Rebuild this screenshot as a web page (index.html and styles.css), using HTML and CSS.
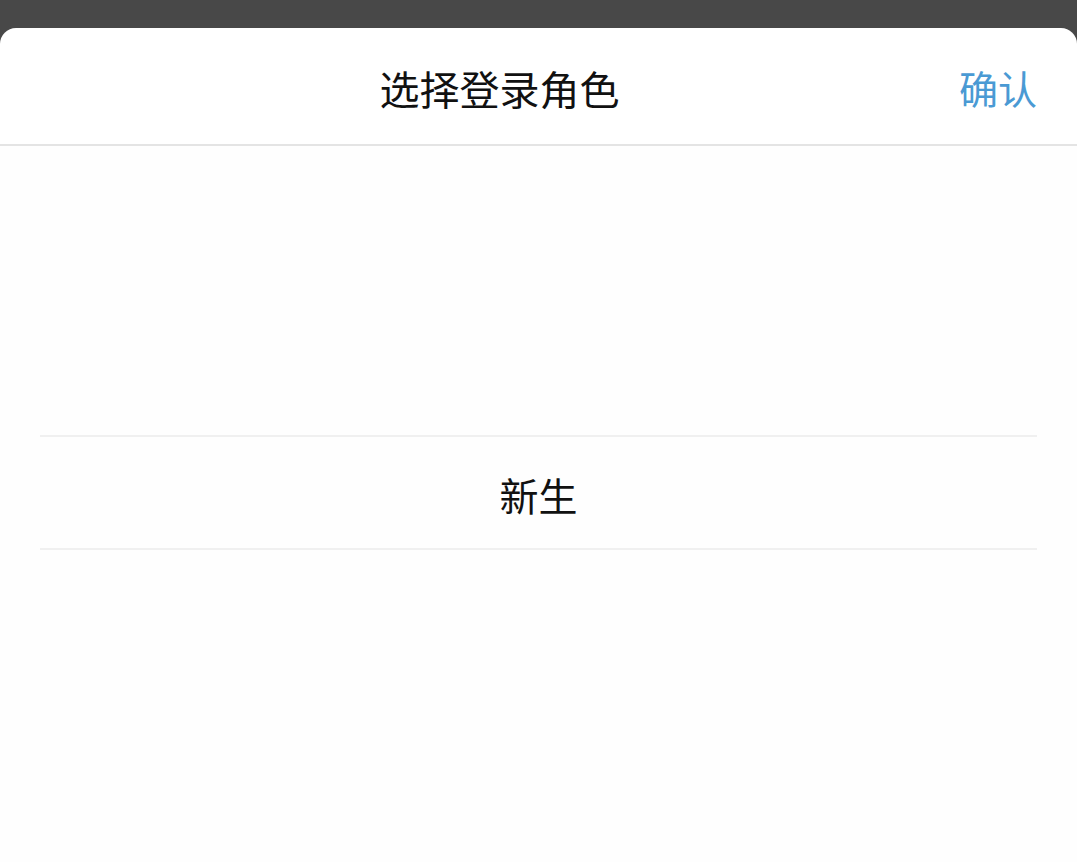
FILE: index.html
```html
<!DOCTYPE html>
<html lang="zh-CN">
<head>
  <meta charset="UTF-8">
  <title>选择登录角色</title>
  <meta name="viewport" content="width=device-width, initial-scale=1.0" />
  <link rel="stylesheet" href="styles.css">
</head>
<body>
  <!-- 背景遮罩 -->
  <div class="mask"></div>

  <!-- 底部弹出的选择器 -->
  <div class="sheet">
    <div class="sheet-header">
      <h1 class="title">选择登录角色</h1>
      <button class="confirm">确认</button>
    </div>

    <div class="picker">
      <div class="picker-row selected">新生</div>
    </div>
  </div>
</body>
</html>
```

FILE: styles.css
```css
:root {
  --mask-color: #484848;
  --text-color: #111111;
  --accent-color: #4a9ad4;
  --line-color: #e4e4e4;
  --row-line: #f0f0f0;
}

html, body {
  height: 100%;
}

body {
  margin: 0;
  background: var(--mask-color);
  font-family: "Noto Sans CJK SC", "Noto Sans", sans-serif;
  color: var(--text-color);
  display: flex;
  flex-direction: column;
}

.mask {
  height: 28px;
  flex-shrink: 0;
}

.sheet {
  flex: 1;
  background: #ffffff;
  border-radius: 16px 16px 0 0;
  display: flex;
  flex-direction: column;
}

/* ヘッダー */
.sheet-header {
  height: 116px;
  border-bottom: 2px solid var(--line-color);
  display: flex;
  align-items: center;
  padding: 0 40px;
}

.title {
  flex: 1;
  margin: 0;
  text-align: center;
  font-size: 40px;
  font-weight: 400;
  line-height: 1;
  padding-top: 3px;
}

.confirm {
  background: none;
  border: none;
  padding: 3px 0 0;
  margin: 0;
  font-family: inherit;
  font-size: 39px;
  line-height: 1;
  color: var(--accent-color);
}

/* ピッカー */
.picker {
  flex: 1;
  padding: 289px 40px 0;
  background: #fefefe;
}

.picker-row {
  height: 111px;
  border-top: 2px solid var(--row-line);
  border-bottom: 2px solid var(--row-line);
  display: flex;
  align-items: center;
  justify-content: center;
  font-size: 39px;
  line-height: 1;
  padding-top: 3px;
  box-sizing: border-box;
  height: 115px;
}
```
